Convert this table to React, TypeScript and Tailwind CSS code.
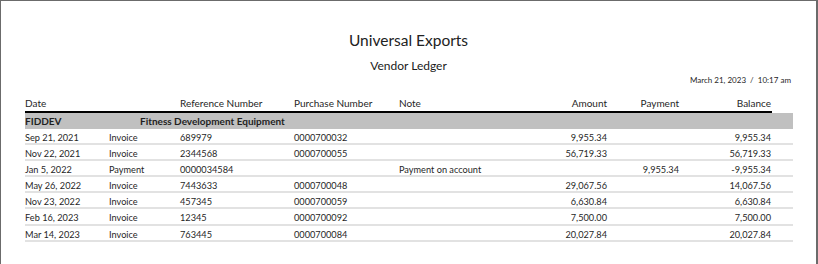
import React from "react";

type Row = {
  date: string;
  type: string;
  ref: string;
  po: string;
  note: string;
  amount: string;
  payment: string;
  balance: string;
  h?: string;
};

const rows: Row[] = [
  { date: "Sep 21, 2021", type: "Invoice", ref: "689979", po: "0000700032", note: "", amount: "9,955.34", payment: "", balance: "9,955.34" },
  { date: "Nov 22, 2021", type: "Invoice", ref: "2344568", po: "0000700055", note: "", amount: "56,719.33", payment: "", balance: "56,719.33" },
  { date: "Jan 5, 2022", type: "Payment", ref: "0000034584", po: "", note: "Payment on account", amount: "", payment: "9,955.34", balance: "-9,955.34" },
  { date: "May 26, 2022", type: "Invoice", ref: "7443633", po: "0000700048", note: "", amount: "29,067.56", payment: "", balance: "14,067.56" },
  { date: "Nov 23, 2022", type: "Invoice", ref: "457345", po: "0000700059", note: "", amount: "6,630.84", payment: "", balance: "6,630.84" },
  { date: "Feb 16, 2023", type: "Invoice", ref: "12345", po: "0000700092", note: "", amount: "7,500.00", payment: "", balance: "7,500.00", h: "h-[17px]" },
  { date: "Mar 14, 2023", type: "Invoice", ref: "763445", po: "0000700084", note: "", amount: "20,027.84", payment: "", balance: "20,027.84" },
];

export default function App() {
  return (
    <div
      className="w-[818px] h-[264px] bg-white border-t border-l border-r-2 border-[#6b6b6b] flex flex-col text-[#1f1f1f] overflow-hidden"
      style={{ fontFamily: "Lato, 'Open Sans', sans-serif" }}
    >
      <div className="pt-[27px] h-[51px] leading-[24px] text-[15.5px] font-normal text-[#222] text-center">Universal Exports</div>
      <div className="mt-[6px] h-[16px] leading-[16px] text-[12px] font-normal text-center text-[#1a1a1a]">Vendor Ledger</div>
      <div className="mt-[1px] h-[10px] leading-[10px] text-[8px] text-right pr-[25px]">March 21, 2023&nbsp; /&nbsp; 10:17 am</div>

      <div className="mt-[11px] ml-[24px] w-[747px] h-[17px] border-b-2 border-black flex pt-[1px] leading-[12px] text-[10px]">
        <div className="w-[155px]">Date</div>
        <div className="w-[114px]">Reference Number</div>
        <div className="w-[105px]">Purchase Number</div>
        <div className="w-[150px]">Note</div>
        <div className="w-[58px] text-right">Amount</div>
        <div className="w-[72px] text-right">Payment</div>
        <div className="w-[92px] text-right">Balance</div>
      </div>

      <div className="ml-[24px] w-[768px] h-[16px] bg-[#c0c0c0] flex leading-[16px] text-[10px] font-bold">
        <div className="w-[115px]">FIDDEV</div>
        <div>Fitness Development Equipment</div>
      </div>

      {rows.map((r, i) => (
        <div
          key={i}
          className={`ml-[24px] w-[768px] ${r.h ?? "h-[16px]"} border-b-2 border-[#e2e2e2] flex pt-[3px] leading-[12px] text-[9.2px]`}
        >
          <div className="w-[84px]">{r.date}</div>
          <div className="w-[71px]">{r.type}</div>
          <div className="w-[114px]">{r.ref}</div>
          <div className="w-[105px]">{r.po}</div>
          <div className="w-[150px]">{r.note}</div>
          <div className="w-[58px] text-right">{r.amount}</div>
          <div className="w-[72px] text-right">{r.payment}</div>
          <div className="w-[92px] text-right">{r.balance}</div>
        </div>
      ))}
    </div>
  );
}
